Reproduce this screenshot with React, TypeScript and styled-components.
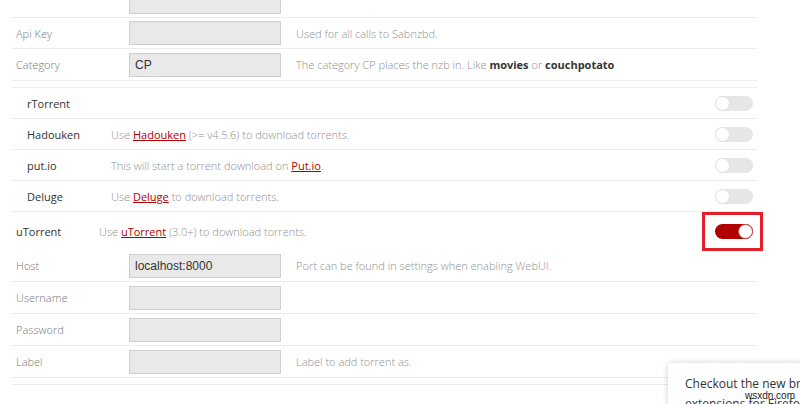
import React from "react";
import styled, { createGlobalStyle } from "styled-components";

const Global = createGlobalStyle`
  html, body { margin: 0; padding: 0; background: #fff; overflow: hidden; }
  body { font-family: "Open Sans", "Liberation Sans", sans-serif; font-size: 11px; color: #333; }
`;

const Page = styled.div`
  position: relative;
  width: 800px;
  height: 404px;
  overflow: hidden;
`;

const Settings = styled.div`
  margin-left: 12px;
  width: 745px;
`;

const Group = styled.div<{ $gapTop?: boolean }>`
  border-top: ${(p) => (p.$gapTop ? "1px solid #ececec" : "none")};
  margin-top: ${(p) => (p.$gapTop ? "6px" : "0")};
`;

const FieldRow = styled.div<{ $first?: boolean; $h?: number }>`
  display: flex;
  align-items: center;
  height: ${(p) => p.$h ?? 31}px;
  padding: 0 4px;
  border-bottom: 1px solid #ececec;
  margin-top: ${(p) => (p.$first ? "-14px" : "0")};
`;

const FieldLabel = styled.label`
  width: 113px;
  flex: none;
  color: #777;
  font-weight: 300;
  font-size: 11px;
`;

const Input = styled.div`
  box-sizing: border-box;
  width: 152px;
  height: 24px;
  flex: none;
  background: #e9e9e9;
  border: 1px solid #cfcfcf;
  padding-left: 5px;
  display: flex;
  align-items: center;
  font-family: "Liberation Sans", Arial, sans-serif;
  font-size: 12px;
  color: #333;
`;

const Help = styled.span`
  margin-left: 15px;
  color: #8f8f8f;
  font-weight: 300;
  font-size: 11px;
  white-space: nowrap;
  b { color: #333; font-weight: 700; }
`;

const ToggleRow = styled.div<{ $sub?: boolean; $h: number; $line?: boolean }>`
  display: flex;
  align-items: center;
  height: ${(p) => p.$h}px;
  padding: 0 4px 0 ${(p) => (p.$sub ? 15 : 4)}px;
  border-bottom: ${(p) => (p.$line ? "1px solid #ececec" : "none")};
`;

const ServiceName = styled.span<{ $w: number }>`
  width: ${(p) => p.$w}px;
  flex: none;
  color: #333;
  font-size: 11px;
`;

const Desc = styled.span`
  flex: 1;
  color: #8f8f8f;
  font-weight: 300;
  font-size: 11px;
  white-space: nowrap;
  a { color: #b00000; text-decoration: underline; font-weight: 400; }
`;

const SwitchWrap = styled.div`
  position: relative;
  flex: none;
`;

const Switch = styled.div<{ $on?: boolean }>`
  position: relative;
  width: 38px;
  height: 15px;
  border-radius: 8px;
  background: ${(p) => (p.$on ? "#b00000" : "#e6e6e6")};
  &::after {
    content: "";
    position: absolute;
    top: 0;
    left: ${(p) => (p.$on ? "23px" : "0")};
    box-sizing: border-box;
    width: 15px;
    height: 15px;
    border-radius: 50%;
    background: #fff;
    border: 1px solid ${(p) => (p.$on ? "#c84a4a" : "#e0e0e0")};
  }
`;

const Highlight = styled.div`
  position: absolute;
  left: -13px;
  top: -12px;
  width: 61px;
  height: 39px;
  box-sizing: border-box;
  border: 3px solid #e2202b;
`;

const Popup = styled.div`
  position: absolute;
  left: 668px;
  top: 363px;
  width: 200px;
  height: 80px;
  background: #fff;
  border-radius: 3px;
  box-shadow: 0 0 6px rgba(0, 0, 0, 0.18);
  padding: 11px 17px;
  box-sizing: border-box;
  font-size: 12px;
  line-height: 20px;
  color: #333;
`;

const Watermark = styled.span`
  position: absolute;
  left: 745px;
  top: 390px;
  font-family: "Liberation Sans", Arial, sans-serif;
  font-size: 10px;
  color: #222;
`;

export default function App() {
  return (
    <Page>
      <Global />
      <Settings>
        <Group>
          <FieldRow $first>
            <FieldLabel />
            <Input />
          </FieldRow>
          <FieldRow $h={30}>
            <FieldLabel>Api Key</FieldLabel>
            <Input />
            <Help>Used for all calls to Sabnzbd.</Help>
          </FieldRow>
          <FieldRow>
            <FieldLabel>Category</FieldLabel>
            <Input>CP</Input>
            <Help>
              The category CP places the nzb in. Like <b>movies</b> or <b>couchpotato</b>
            </Help>
          </FieldRow>
        </Group>
        <Group $gapTop>
          <ToggleRow $sub $h={30} $line>
            <ServiceName $w={84}>rTorrent</ServiceName>
            <Desc />
            <Switch />
          </ToggleRow>
          <ToggleRow $sub $h={30} $line>
            <ServiceName $w={84}>Hadouken</ServiceName>
            <Desc>
              Use <a>Hadouken</a> (&gt;= v4.5.6) to download torrents.
            </Desc>
            <Switch />
          </ToggleRow>
          <ToggleRow $sub $h={30} $line>
            <ServiceName $w={84}>put.io</ServiceName>
            <Desc>
              This will start a torrent download on <a>Put.io</a>.
            </Desc>
            <Switch />
          </ToggleRow>
          <ToggleRow $sub $h={30} $line>
            <ServiceName $w={84}>Deluge</ServiceName>
            <Desc>
              Use <a>Deluge</a> to download torrents.
            </Desc>
            <Switch />
          </ToggleRow>
        </Group>
        <Group>
          <ToggleRow $h={38}>
            <ServiceName $w={83}>uTorrent</ServiceName>
            <Desc>
              Use <a>uTorrent</a> (3.0+) to download torrents.
            </Desc>
            <SwitchWrap>
              <Switch $on />
              <Highlight />
            </SwitchWrap>
          </ToggleRow>
          <FieldRow>
            <FieldLabel>Host</FieldLabel>
            <Input>localhost:8000</Input>
            <Help>Port can be found in settings when enabling WebUI.</Help>
          </FieldRow>
          <FieldRow>
            <FieldLabel>Username</FieldLabel>
            <Input />
          </FieldRow>
          <FieldRow>
            <FieldLabel>Password</FieldLabel>
            <Input />
          </FieldRow>
          <FieldRow>
            <FieldLabel>Label</FieldLabel>
            <Input />
            <Help>Label to add torrent as.</Help>
          </FieldRow>
        </Group>
        <Group $gapTop />
      </Settings>
      <Popup>Checkout the new browser extensions for Firefox and Chrome</Popup>
      <Watermark>wsxdn.com</Watermark>
    </Page>
  );
}
